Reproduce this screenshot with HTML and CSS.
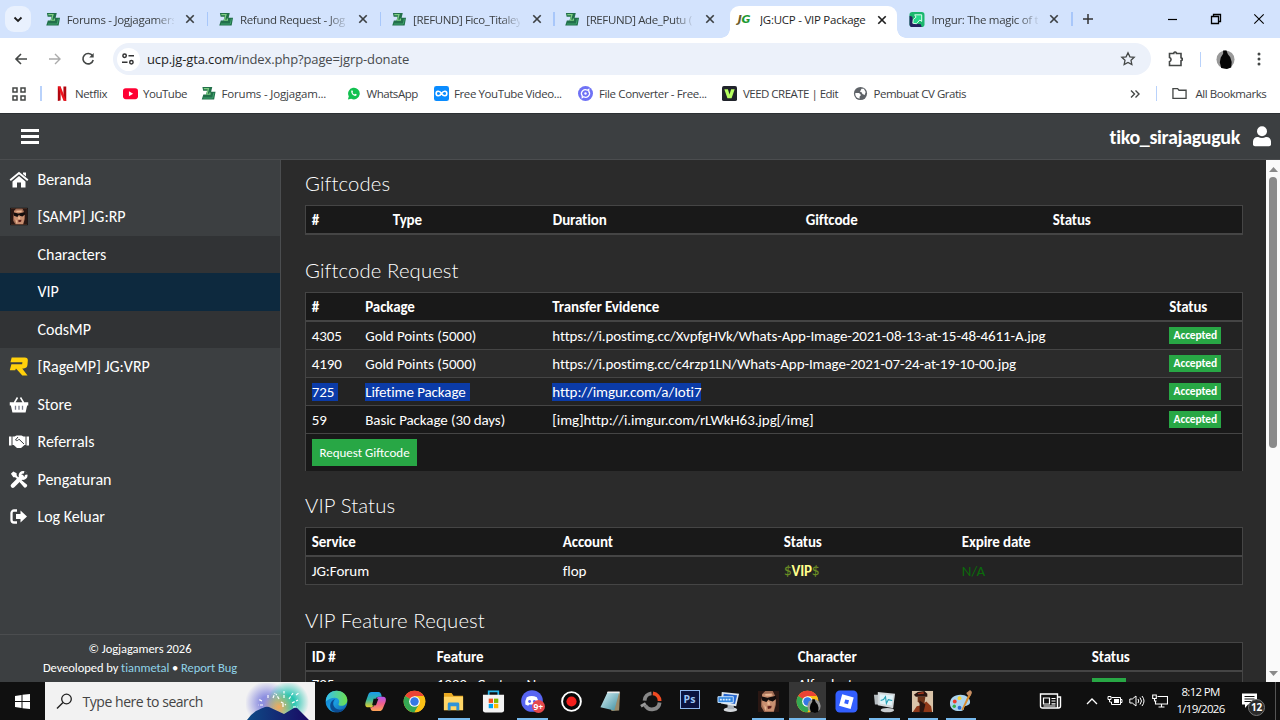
FILE: index.html
```html
<!DOCTYPE html>
<html lang="id">
<head>
<meta charset="utf-8">
<title>JG:UCP - VIP Package</title>
<link rel="stylesheet" href="styles.css">
</head>
<body>
<svg class="defs" width="0" height="0">
  <defs>
    <linearGradient id="gEdge" x1="0" y1="0" x2="1" y2="1"><stop offset="0" stop-color="#0a74c9"/><stop offset=".5" stop-color="#1b9de2"/><stop offset="1" stop-color="#0c59a4"/></linearGradient>
    <linearGradient id="gEdge2" x1="0" y1="0" x2="1" y2="0"><stop offset="0" stop-color="#35c1f1"/><stop offset="1" stop-color="#6de04d"/></linearGradient>
    <linearGradient id="gCopA" x1="0" y1="0" x2="0" y2="1"><stop offset="0" stop-color="#1a9cf0"/><stop offset=".5" stop-color="#35b6a0"/><stop offset="1" stop-color="#e8d02c"/></linearGradient>
    <linearGradient id="gCopB" x1="0" y1="0" x2="0" y2="1"><stop offset="0" stop-color="#b456f0"/><stop offset=".5" stop-color="#f0608a"/><stop offset="1" stop-color="#fda555"/></linearGradient>
    <linearGradient id="gNote" x1="0" y1="0" x2="1" y2="1"><stop offset="0" stop-color="#d9f3f6"/><stop offset="1" stop-color="#3f8ea0"/></linearGradient>
    <radialGradient id="gPurple"><stop offset=".3" stop-color="#8d8fe0"/><stop offset="1" stop-color="#8d8fe0" stop-opacity="0"/></radialGradient>
    <radialGradient id="gTeal"><stop offset=".3" stop-color="#27c5b2"/><stop offset="1" stop-color="#27c5b2" stop-opacity="0"/></radialGradient>
    <radialGradient id="gGold"><stop offset="0" stop-color="#f5a55a"/><stop offset="1" stop-color="#f0c060" stop-opacity="0"/></radialGradient>
    <linearGradient id="gHill" x1="0" y1="0" x2="1" y2="0"><stop offset="0" stop-color="#0e4a86"/><stop offset="1" stop-color="#190a63"/></linearGradient>
    <symbol id="jg" viewBox="0 0 16 16"><path d="M1.500 1h10.500L10.800 6H15.500L14 14.500H.8L2.500 9h2.800L6.500 5H2.300z" fill="#22704a"/><path d="M3 2.800h5L6.300 8.800H9.500V7" fill="none" stroke="#7fce82" stroke-width="1.300"/><path d="M2.500 12.800h10l1.200-5.500" fill="none" stroke="#3fa56f" stroke-width="1"/></symbol>
    <symbol id="x" viewBox="0 0 10 10"><path d="M1.900 1.900l6.200 6.200M8.100 1.900l-6.200 6.200" stroke="currentColor" stroke-width="1.400"/></symbol>
    <symbol id="chrome" viewBox="0 0 24 24"><circle cx="12" cy="12" r="11.300" fill="#fbc116"/><path d="M12 12L2.200 6.350A11.300 11.300 0 0 1 21.800 6.350H12z" fill="#ea4335"/><path d="M2.200 6.350A11.300 11.300 0 0 0 12 23.300l4.900-8.500L12 12z" fill="#34a853"/><path d="M12 6.500h9.850A11.300 11.300 0 0 1 12 23.300l4.900-8.500z" fill="#fbc116"/><circle cx="12" cy="12" r="5.600" fill="#fff"/><circle cx="12" cy="12" r="4.400" fill="#3478e5"/></symbol>
    <symbol id="face" viewBox="0 0 20 20"><path fill="#a06c54" d="M0 0h20v20H0z"/><path fill="#c98f70" d="M4 3l9-1 4 6-2 11H7L4 13z"/><path fill="#2a1713" d="M0 0h7L4 3l-1 8v4l3 5H0zM14 0h6v20h-5l2-7V6z"/><path fill="#120c0c" d="M3 5l6 1.500L11 6l6-1.500.5 3L14 10l-3-1-1-1-2 2.500L4 9z"/><path fill="#e9b995" d="M9 10l2 .5.500 2.500H9zM6 13l2 3-1 3zM7 3h6v1.500H7z"/><path fill="#5f1f1b" d="M9 14.500l4-.5-.5 2.500-3 .5z"/></symbol>
    <symbol id="pc" viewBox="0 0 24 24"><ellipse cx="14" cy="20.500" rx="7" ry="2.500" fill="#d4d8dc"/><path d="M11 14h6l1 6h-7z" fill="#aab2ba"/><path d="M5 2l18 2-3 13L4 14z" fill="#dfe6ec"/><path d="M7 4l14 1.500-2.300 9L6 12z" fill="#2767cf"/></symbol>
  </defs>
</svg>
<div class="screen">
  <div class="tabs">
    <div class="tab-search"><svg width="26" height="26" viewBox="0 0 26 26"><path d="M9.500 11.500l3.500 3.500 3.500-3.500" fill="none" stroke="#1f1f1f" stroke-width="1.800"/></svg></div>
    <div class="tab sep"><svg class="fav"><use href="#jg"/></svg><span>Forums - Jogjagamers</span><svg class="close"><use href="#x"/></svg></div>
    <div class="tab sep"><svg class="fav"><use href="#jg"/></svg><span>Refund Request - Jog</span><svg class="close"><use href="#x"/></svg></div>
    <div class="tab sep"><svg class="fav"><use href="#jg"/></svg><span>[REFUND] Fico_Titaley</span><svg class="close"><use href="#x"/></svg></div>
    <div class="tab"><svg class="fav"><use href="#jg"/></svg><span>[REFUND] Ade_Putu (</span><svg class="close"><use href="#x"/></svg></div>
    <div class="tab active"><b class="fav jgfav"><i>J</i>G</b><span>JG:UCP - VIP Package</span><svg class="close"><use href="#x"/></svg></div>
    <div class="tab sep last"><svg class="fav" viewBox="0 0 16 16"><rect width="16" height="16" rx="3" fill="#1bb76e"/><path d="M0 4l3 1 1 7 8 1 1 3H3a3 3 0 0 1-3-3z" fill="#23205e"/><path d="M5.500 3H13v7l-2-1.500-3.500 4-4-.5.500-4L7 5.500z" fill="#25d98a" stroke="#e8fff5" stroke-width="1"/></svg><span>Imgur: The magic of t</span><svg class="close"><use href="#x"/></svg></div>
    <svg class="plus" viewBox="0 0 12 12"><path d="M6 1v10M1 6h10" stroke="#333" stroke-width="1.500"/></svg>
    <div class="win">
      <svg viewBox="0 0 12 12"><path d="M1 6.500h9" stroke="#000" stroke-width="1.200"/></svg>
      <svg viewBox="0 0 12 12"><path d="M1.500 3.500h7v7h-7zM3.500 3.500v-2h7v7h-2" fill="none" stroke="#000" stroke-width="1.300"/></svg>
      <svg viewBox="0 0 12 12"><path d="M1.300 1.300l9.400 9.400M10.700 1.300l-9.400 9.400" stroke="#000" stroke-width="1.100"/></svg>
    </div>
  </div>

  <div class="toolbar">
    <svg class="nav" viewBox="0 0 16 16"><path d="M14 8H3M8 3L3 8l5 5" fill="none" stroke="#444746" stroke-width="1.600"/></svg>
    <svg class="nav" viewBox="0 0 16 16"><path d="M2 8h11M8 3l5 5-5 5" fill="none" stroke="#ababab" stroke-width="1.400"/></svg>
    <svg class="nav" viewBox="0 0 16 16"><path d="M12.500 4.800A5.200 5.200 0 1 0 13.200 9" fill="none" stroke="#444746" stroke-width="1.600"/><path d="M13.700 2v4.500H9.200z" fill="#444746"/></svg>
    <div class="omnibox">
      <div class="site"><svg width="14" height="14" viewBox="0 0 14 14" fill="none" stroke="#333" stroke-width="1.500"><circle cx="3.600" cy="3.800" r="1.700"/><path d="M7.500 3.800H13M1 10.200h5.500"/><circle cx="10.400" cy="10.200" r="1.700"/></svg></div>
      <span class="url"><em>ucp.jg-gta.com</em>/index.php?page=jgrp-donate</span>
      <svg width="16" height="16" viewBox="0 0 16 16"><path d="M8 1.800l1.900 4 4.300.5-3.200 3 .85 4.300L8 11.500l-3.850 2.100L5 9.300l-3.200-3 4.300-.5z" fill="none" stroke="#444746" stroke-width="1.300"/></svg>
    </div>
    <svg class="ext" viewBox="0 0 18 18"><path d="M2.500 3.500h4.300V2.800a1.500 1.500 0 0 1 2.600 0v.7H14v4.300l1.200.7v1.500l-1.200.7V15.500H2.500v-3.800a2.200 2.200 0 0 0 0-4.200z" fill="none" stroke="#444746" stroke-width="1.600"/></svg>
    <i class="vr"></i>
    <svg class="avatar" viewBox="0 0 20 20"><circle cx="10" cy="10" r="9.500" fill="#999"/><path d="M7.500.5h3.500l1.500 4 2.500 3 1.500 5-.5 6-4.500 1.500L5.500 19l-1.500-6 1-5L7.500 4z" fill="#050505"/></svg>
    <svg class="dots" viewBox="0 0 4 16" fill="#444746"><circle cx="2" cy="3" r="1.500"/><circle cx="2" cy="8" r="1.500"/><circle cx="2" cy="13" r="1.500"/></svg>
  </div>

  <div class="bookmarks">
    <svg class="apps" viewBox="0 0 14 14" fill="none" stroke="#444746" stroke-width="1.500"><path d="M1 1h4v4H1zM9 1h4v4H9zM1 9h4v4H1zM9 9h4v4H9z"/></svg>
    <i class="vr"></i>
    <div class="bm b1"><svg viewBox="0 0 16 16"><path d="M3 .5h3v15l-3 .5zM9 .5h3V16l-3-.5z" fill="#b1060f"/><path d="M3 .5h3L12 16l-3-.5z" fill="#f0121c"/></svg><span>Netflix</span></div>
    <div class="bm b2"><svg viewBox="0 0 16 16"><rect y="2.500" width="16" height="11.500" rx="3" fill="#ff0033"/><path d="M6.300 5.500l4.500 2.700-4.500 2.700z" fill="#fff"/></svg><span>YouTube</span></div>
    <div class="bm b3"><svg><use href="#jg"/></svg><span>Forums - Jogjagam...</span></div>
    <div class="bm b4"><svg viewBox="0 0 16 16"><path d="M2 14.500l1-3.500a6.200 6.200 0 1 1 2.500 2.500z" fill="#12c150"/><path d="M5.500 5l1.200-.5.800 1.800-.6.800c.4.900 1.100 1.500 2 1.900l.8-.7 1.800.8c-.2 1.200-1.100 1.700-2 1.500-2.300-.5-4.200-2.800-4-5.600z" fill="#fff"/></svg><span>WhatsApp</span></div>
    <div class="bm b5"><svg viewBox="0 0 16 16"><rect width="16" height="16" rx="2.500" fill="#0a8cff"/><path d="M8 8C5.800 4.500 2.300 5.200 2.300 8S5.800 11.500 8 8s5.700-2.800 5.700 0S10.200 11.500 8 8z" fill="none" stroke="#fff" stroke-width="1.700"/></svg><span>Free YouTube Video...</span></div>
    <div class="bm b6"><svg viewBox="0 0 16 16"><circle cx="8" cy="8" r="8" fill="#6f72f5"/><path d="M4 10a4.300 4.300 0 0 1 6-5.500l1.500-1v3.300M12 6a4.300 4.300 0 0 1-6 5.500l-1.500 1V9.200" fill="none" stroke="#fff" stroke-width="1.300"/><circle cx="8" cy="8" r="1.300" fill="#fff"/></svg><span>File Converter - Free...</span></div>
    <div class="bm b7"><svg viewBox="0 0 16 16"><rect width="16" height="16" rx="2" fill="#20232b"/><path d="M2.500 3.500h3.800L8 9l1.700-5.500h3.800L10.200 13H5.800z" fill="#b6ff60"/></svg><span>VEED CREATE | Edit</span></div>
    <div class="bm b8"><svg viewBox="0 0 16 16"><circle cx="8" cy="8" r="7" fill="#5f6368"/><path d="M2.500 7.500h4l2 2-1.500 2v2C4 13 2 10.500 2.500 7.500zM9 3l2.500 0 2 3.500-1 3-2.500-1-.5-1.500L7.500 6z" fill="#fff"/></svg><span>Pembuat CV Gratis</span></div>
    <svg class="more" viewBox="0 0 12 12"><path d="M2 2.500L5.500 6 2 9.500M6.500 2.500L10 6 6.500 9.500" fill="none" stroke="#444746" stroke-width="1.400"/></svg>
    <i class="vr"></i>
    <div class="bm all"><svg viewBox="0 0 16 16"><path d="M1 13.200V2.800h5l1.500 1.700H15v8.700z" fill="none" stroke="#444746" stroke-width="1.400"/></svg><span>All Bookmarks</span></div>
  </div>

  <div class="app-head">
    <svg width="18" height="16" viewBox="0 0 18 16"><path d="M0 0h18v3H0zM0 6h18v3H0zM0 12h18v3H0z" fill="#fff"/></svg>
    <div class="user"><span>tiko_sirajaguguk</span><svg width="18" height="21" viewBox="0 0 18 21" fill="#fff"><circle cx="9" cy="5.200" r="5"/><path d="M0 18v-2.500C0 12.800 2 11 4.500 11h.7a8 8 0 0 0 7.600 0h.7C16 11 18 12.800 18 15.500V18a2 2 0 0 1-2 2.200H2A2 2 0 0 1 0 18z"/></svg></div>
  </div>

  <div class="main">
    <aside>
      <ul class="menu">
        <li><svg viewBox="0 0 20 18"><path d="M1.200 9.700L10 2.500l8.800 7.200" fill="none" stroke="#fff" stroke-width="2"/><path d="M14 2h3v4l-3-2.500zM10 5.500l6.500 5.500v6H12v-5H8v5H3.500v-6z" fill="#fff"/></svg>Beranda</li>
        <li><svg viewBox="-2 -1.500 24 23"><path d="M-.5-.5h21v21h-21z"/><use href="#face" width="20" height="20"/></svg>[SAMP] JG:RP</li>
        <li class="sub">Characters</li>
        <li class="sub on">VIP</li>
        <li class="sub">CodsMP</li>
        <li><svg viewBox="0 0 20 20"><path d="M2.300.5H16q3.500 0 3.300 3.300l-.4 4.700q-.4 3.500-4 3.500h-1.500L19 19.500h-5.500L6.800 12 6 14H.3L2 7.500h11.300l.3-2H1z" fill="#ffd00b"/></svg>[RageMP] JG:VRP</li>
        <li><svg viewBox="0 0 20 18"><path d="M1.500 7.500h17v1.800h-1L16 16.200H4L2.500 9.300h-1zM5.500 7l3-5M14.500 7l-3-5" fill="#fff" stroke="#fff" stroke-width="1.500"/><path d="M6.500 10.300v4M10 10.300v4M13.500 10.300v4" stroke="#777b8a" stroke-width="1.300"/></svg>Store</li>
        <li><svg viewBox="0 0 20 18"><path d="M0 4h2.500v9H0zM17.500 4H20v9h-2.500zM3.500 4h2l2-1h5l2 1h2v8.500h-1L12 15.500H8L4.700 12.500H3.500z" fill="#fff"/><path d="M9 4.500L6.500 7.500c1.500 1.500 3 0 3.500-.8l5 4.800" fill="none" stroke="#3c3f41" stroke-width="1"/></svg>Referrals</li>
        <li><svg viewBox="0 0 20 20"><path d="M3.500 3.500L16 16" stroke="#fff" stroke-width="2.200"/><path d="M1.500 4L4 1.500l3.500 2v3L6.500 7.500H4zM10.500 12.500l2-2 6 5c.8 1.500-1.500 3.700-3 3z" fill="#fff"/><path d="M3.500 16.500L13 7" stroke="#fff" stroke-width="4.500" stroke-linecap="round"/><circle cx="14.300" cy="5.700" r="3.300" fill="none" stroke="#fff" stroke-width="2.800"/><path d="M14.500 5.500l1.500-5 4 4z" fill="#3c3f41"/></svg>Pengaturan</li>
        <li><svg viewBox="0 0 20 18"><path d="M8 3H5a2.500 2.500 0 0 0-2.500 2.500v7A2.500 2.500 0 0 0 5 15h3" fill="none" stroke="#fff" stroke-width="2.300"/><path d="M7 6.500h4.500V3L18 9l-6.500 6v-3.500H7z" fill="#fff"/></svg>Log Keluar</li>
      </ul>
      <footer><div>© Jogjagamers 2026</div><div>Deveoloped by <a>tianmetal</a> • <a>Report Bug</a></div></footer>
    </aside>
    <section>
      <h4>Giftcodes</h4>
      <table class="t1"><thead><tr><th>#</th><th>Type</th><th>Duration</th><th>Giftcode</th><th>Status</th></tr></thead></table>
      <h4>Giftcode Request</h4>
      <table class="t2">
        <thead><tr><th>#</th><th>Package</th><th>Transfer Evidence</th><th>Status</th></tr></thead>
        <tbody>
          <tr><td>4305</td><td>Gold Points (5000)</td><td>https://i.postimg.cc/XvpfgHVk/Whats-App-Image-2021-08-13-at-15-48-4611-A.jpg</td><td><b class="badge">Accepted</b></td></tr>
          <tr><td>4190</td><td>Gold Points (5000)</td><td>https://i.postimg.cc/c4rzp1LN/Whats-App-Image-2021-07-24-at-19-10-00.jpg</td><td><b class="badge">Accepted</b></td></tr>
          <tr><td><mark class="pad">725</mark></td><td><mark class="pad">Lifetime Package</mark></td><td><mark>http://imgur.com/a/Ioti7</mark></td><td><b class="badge">Accepted</b></td></tr>
          <tr class="dark"><td>59</td><td>Basic Package (30 days)</td><td>[img]http://i.imgur.com/rLWkH63.jpg[/img]</td><td><b class="badge">Accepted</b></td></tr>
          <tr class="dark foot"><td colspan="4"><button>Request Giftcode</button></td></tr>
        </tbody>
      </table>
      <h4>VIP Status</h4>
      <table class="t3">
        <thead><tr><th>Service</th><th>Account</th><th>Status</th><th>Expire date</th></tr></thead>
        <tbody><tr><td>JG:Forum</td><td>flop</td><td class="vip">$<b>VIP</b>$</td><td class="na">N/A</td></tr></tbody>
      </table>
      <h4>VIP Feature Request</h4>
      <table class="t4">
        <thead><tr><th>ID #</th><th>Feature</th><th>Character</th><th>Status</th></tr></thead>
        <tbody><tr><td>725</td><td>1333 : Custom Name</td><td>Alfredostar</td><td><b class="badge short"></b></td></tr></tbody>
      </table>
    </section>
    <div class="scroll"><svg width="9" height="5" viewBox="0 0 9 5"><path d="M0 5l4.500-5L9 5z" fill="#8a8a8a"/></svg><i></i><svg width="9" height="5" viewBox="0 0 9 5"><path d="M0 0l4.500 5L9 0z" fill="#8a8a8a"/></svg></div>
  </div>

  <div class="taskbar">
    <div class="start"><svg width="15" height="15" viewBox="0 0 15 15"><path d="M0 2l6.500-1v6H0zM7.500.8L15 0v7H7.500zM0 8h6.500v6L0 13zM7.500 8H15v7l-7.500-.8z" fill="#fff"/></svg></div>
    <div class="search">
      <svg width="17" height="17" viewBox="0 0 17 17"><circle cx="10.500" cy="6" r="4.800" fill="none" stroke="#222" stroke-width="1.300"/><path d="M7 9.500L1 15.500" stroke="#222" stroke-width="1.400"/></svg>
      <span>Type here to search</span>
      <svg class="art" width="66" height="37" viewBox="0 0 66 37"><circle cx="21" cy="20" r="22" fill="url(#gPurple)"/><circle cx="42" cy="19" r="21" fill="url(#gTeal)"/><circle cx="33" cy="24" r="16" fill="url(#gGold)"/><g stroke="#fff" stroke-width="1.200" fill="none"><path d="M22 15v-4M16 18l-4-2M27 15l2-5M17 22h-5M38 15V8M43 16l4-6M46 20l6-3M33 16l-3-5M47 24h5M37 21v3M35 19l5 3M50 12l3-2" stroke-dasharray="3 1.500"/></g><path d="M1 37q3-5 9-9 6-3 9-4 3-1 6 1l13 6 10-6q3-1 5 2l10 10z" fill="url(#gHill)"/></svg>
    </div>
    <div class="icons">
      <div class="ic"><svg viewBox="0 0 24 24"><circle cx="12" cy="12" r="11.300" fill="url(#gEdge)"/><path d="M1 10C2 4 7 .7 12 .7c7 0 11.300 5 11.300 9.800 0 4-3 6-6 6-2.800 0-3.800-1.200-3-2.500 1.500-2.500 0-6-4-6-4 0-7.500 2-9.300 4z" fill="url(#gEdge2)"/><path d="M10.500 9.500c-4 4-1.500 11 5 11 2 0 4-.8 5.500-2-3 5-8 5.500-12 4C4 20.500 4 11.500 10.500 9.500z" fill="#0b4b92"/></svg></div>
      <div class="ic"><svg viewBox="0 0 24 24"><path d="M8 2h7c2 0 2.700 1.500 3.200 3.500L18.500 7h-3c-2 0-3 1-3.500 3l-2 6c-.5 1.500-1.500 2-3 2H4c-3 0-3-3-2.300-5.500l2.500-7C5 3 6 2 8 2z" fill="url(#gCopA)"/><path d="M15.500 7H20c3 0 3.300 3 2.500 5.500l-2.500 6c-.8 2.500-2 3.500-4 3.500H9.500C7.500 22 7 20.500 6.500 18H8c1.500 0 2.500-1 3-2.500l2-6c.5-1.500 1-2.500 2.500-2.500z" fill="url(#gCopB)"/><path d="M10 9h5l-2.500 7h-4z" fill="#101010"/></svg></div>
      <div class="ic"><svg><use href="#chrome"/></svg></div>
      <div class="ic run"><svg viewBox="0 0 24 24"><path d="M2 3h8l2 3h10v15H2z" fill="#e8a820"/><path d="M2 7h20v14H2z" fill="#ffd667"/><path d="M6 21v-6.500q0-1.500 1.500-1.500h9q1.500 0 1.500 1.500V21h-3v-4H9v4z" fill="#2e93d8"/></svg></div>
      <div class="ic"><svg viewBox="0 0 24 24"><path d="M7 6V1.500h10V6" fill="none" stroke="#25b5e9" stroke-width="1.800"/><path d="M1 5h22v16q0 2.500-2.500 2.500h-17Q1 23.500 1 21z" fill="#f3f3f3"/><path d="M7 9h4.500v4.500H7z" fill="#f25022"/><path d="M12.500 9H17v4.500h-4.500z" fill="#7fba00"/><path d="M7 14.500h4.500V19H7z" fill="#00a4ef"/><path d="M12.500 14.500H17V19h-4.500z" fill="#ffb900"/></svg></div>
      <div class="ic run"><svg viewBox="0 0 24 24"><circle cx="11.500" cy="11.500" r="11.300" fill="#5865f2"/><path d="M6 7.500q5-2.500 10.500 0Q19 12 18.500 15l-3 1.500-1-1.500H8.500l-1 1.500-3-1.500Q4 11 6 7.500z" fill="#fff"/><circle cx="9" cy="12" r="1.500" fill="#5865f2"/><circle cx="14" cy="12" r="1.500" fill="#5865f2"/></svg><b class="nine">9+</b></div>
      <div class="ic"><svg viewBox="0 0 24 24"><circle cx="12" cy="12" r="9.800" fill="#080808" stroke="#fff" stroke-width="2"/><circle cx="12" cy="12" r="5.300" fill="#f41f1c"/></svg></div>
      <div class="ic"><svg viewBox="0 0 24 24"><path d="M9 2l13 .5-1 19-8 .5z" fill="#9b8b6a"/><path d="M9 2l12 .5-5 19L1.500 18z" fill="url(#gNote)"/><path d="M9 1.500h12.500v2L8.500 3z" fill="#eee"/></svg></div>
      <div class="ic"><svg viewBox="0 0 24 24" fill="none" stroke-width="4"><path d="M21.500 13a8 8 0 0 1-15 3M5.800 11A8 8 0 0 1 13 3.500" stroke="#878787"/><path d="M14.500 3.500a8 8 0 0 1 7 8" stroke="#f04a22"/><path d="M7 14l-5 3" stroke="#9a9a9a" stroke-width="3"/></svg></div>
      <div class="ic"><b class="ps">Ps</b></div>
      <div class="ic"><svg viewBox="0 0 24 24"><use href="#pc"/><path d="M1 7h16v6H1z" fill="#2f83de" stroke="#c9e5ff" stroke-width="1"/><path d="M3 10h12" stroke="#dff0ff" stroke-width="2" stroke-dasharray="2 1"/></svg></div>
      <div class="ic run"><svg viewBox="0 0 24 24"><use href="#face" x="1" y="1" width="22" height="22"/></svg></div>
      <div class="ic run cur"><svg><use href="#chrome"/></svg><svg class="mini" viewBox="0 0 20 20"><circle cx="10" cy="10" r="9.500" fill="#999"/><path d="M7.500.5h3.500l1.500 4 2.500 3 1.500 5-.5 6-4.500 1.500L5.500 19l-1.500-6 1-5L7.500 4z" fill="#050505"/></svg></div>
      <div class="ic"><svg viewBox="0 0 24 24"><rect x=".5" y=".5" width="23" height="23" rx="4.500" fill="#335fff"/><path d="M7.500 4.500l12 3.200-3.200 12-12-3.200z" fill="#fff"/><path d="M10.700 9.800l4 1-1.200 4-3.900-1.100z" fill="#335fff"/></svg></div>
      <div class="ic run"><svg viewBox="0 0 24 24"><path d="M1 5h8v10H2z" fill="#b5bcc0"/><ellipse cx="15" cy="21" rx="7" ry="2.300" fill="#c7cccf"/><path d="M5 2l18 2-2 15-16-3z" fill="#d2d8db"/><path d="M7 4.500l14 1.300-1.500 10.500L7 14z" fill="#dff3f9"/><path d="M8 11l3-1 2-3 1 7 2-4 4 1" fill="none" stroke="#22a0b4" stroke-width="1.200"/></svg></div>
      <div class="ic run"><svg viewBox="0 0 24 24"><path fill="#d9c3a8" d="M1 1h22v22H1z"/><path d="M3 5l4-3 7-1 3 3v3L5 7z" fill="#2b1510"/><path d="M7 3.500l6-1.500.5 2-6 .5z" fill="#a3361c"/><path d="M7 7h8l-1 7-4 1-3-3z" fill="#6b3319"/><path d="M2 23l4-6 5-1 5-4 5 5 1 6z" fill="#8f3818"/><path d="M9 11l6 4-2 8H9z" fill="#2a1510"/></svg></div>
      <div class="ic run"><svg viewBox="0 0 24 24"><path d="M12 5C5 5 1 9 1 14s4 8 10 8 4-3 5-4.500 6-1 6-5S18 5 12 5z" fill="#a9d3ee"/><circle cx="6" cy="12" r="2" fill="#ef3b2b"/><circle cx="11" cy="8.500" r="2" fill="#f8d233"/><circle cx="5.500" cy="17" r="1.800" fill="#35b04a"/><circle cx="11" cy="18.500" r="2" fill="#2d6bd0"/><path d="M22 1l1.500 3-9 17-1.500-.5z" fill="#d88b2c"/><path d="M18 3l4-3 2 2-1.500 4-3-.5z" fill="#c78f66"/></svg></div>
    </div>
    <div class="tray">
      <svg class="news" viewBox="0 0 22 16" fill="none" stroke="#fff" stroke-width="1.400"><path d="M1 1h17v14H3q-2 0-2-2zM18 4h3v9q0 2-2 2h-2"/><path d="M4 5h6v6H4zM12 5.500h4M12 8h4M12 10.800h4M4 13h12" stroke-width="1.200"/></svg>
      <svg class="chev" viewBox="0 0 12 8"><path d="M1 7l5-5 5 5" fill="none" stroke="#fff" stroke-width="1.300"/></svg>
      <svg class="t16" viewBox="0 0 16 16" fill="none" stroke="#fff"><path d="M4.500 4.500h9v7h-9V9M13.500 6.500H15v3h-1.500M1 3.500h3v3H1zM2.500 6.500V9h2"/><path d="M7 6h5v4H7z" fill="#fff" stroke="none"/></svg>
      <svg class="t16" viewBox="0 0 16 16" fill="none" stroke="#fff"><path d="M.8 6h2.500L7 3v10L3.300 10H.8zM9 6q1.500 2 0 4M11 4.500q3 3.500 0 7M13 3q4 5 0 10"/></svg>
      <svg class="t16" viewBox="0 0 16 16" fill="none" stroke="#fff" stroke-width="1.100"><path d="M5.500 3.500h10v7.500h-12V8M9.500 11v3M6.500 14h6M.7 2h3.600v3.500H.7zM2.500 5.500V8h2"/></svg>
      <div class="clock"><div>8:12 PM</div><div>1/19/2026</div></div>
      <div class="notif"><svg width="16" height="16" viewBox="0 0 16 16"><path d="M0 .5h15v11H6L3 15v-3.500H0z" fill="#fff"/><path d="M2.500 3.500h10M2.500 6h10M2.500 8.500h10" stroke="#101010"/></svg><b>12</b></div>
    </div>
  </div>
</div>
</body>
</html>
```
FILE: styles.css
```css
* { box-sizing: border-box; }
body { margin: 0; font-family: "Open Sans", sans-serif; }
.defs { position: absolute; }
.screen { width: 1280px; height: 720px; overflow: hidden; display: flex; flex-direction: column; }
svg { display: block; flex: none; }

.tabs { height: 38px; background: #d3e3fd; display: flex; align-items: center; flex: none; font-size: 11.500px; letter-spacing: -.3px; color: #3c4043; }
.tab-search { width: 26px; height: 26px; border-radius: 9px; background: #e9f1fe; margin: 0 4px 0 5px; }
.tab { width: 173.200px; height: 38px; display: flex; align-items: center; padding-left: 9.500px; position: relative; }
.fav { width: 16px; height: 15px; margin-right: 6.200px; flex: none; }
.tab span { width: 107px; overflow: hidden; white-space: nowrap; mask-image: linear-gradient(90deg, #000 82%, rgba(0, 0, 0, .1)); }
.tab:nth-child(4) span, .tab:nth-child(5) span { letter-spacing: -.38px; }
.close { width: 12px; height: 12px; margin-left: 10.500px; }
.sep::after { content: ""; position: absolute; right: 0; top: 12px; width: 1.500px; height: 14px; background: #a8c7fa; }
.active { height: 32px; align-self: flex-end; width: 167px; margin: 0 4px 0 2px; padding: 0 0 5px 8px; background: #fff; border-radius: 9px 9px 0 0; color: #1f1f1f; letter-spacing: -.25px; }
.active span { mask-image: none; }
.active .close { margin-left: 9px; }
.active::before, .active::after { content: ""; position: absolute; bottom: 0; width: 9px; height: 9px; }
.active::before { left: -9px; background: radial-gradient(circle at 0 0, transparent 8.500px, #fff 9px); }
.active::after { right: -9px; background: radial-gradient(circle at 100% 0, transparent 8.500px, #fff 9px); }
.jgfav { color: #1c9a31; font: italic bold 11px/15px "DejaVu Sans", sans-serif; letter-spacing: -.3px; }
.jgfav i { color: #6b5b2c; }
.last { width: 172px; padding-left: 8.500px; }
.last .close { margin-left: 9.500px; }
.plus { width: 12px; height: 12px; margin-left: 9.500px; }
.win { margin-left: auto; display: flex; gap: 31px; padding-right: 15.500px; }
.win svg { width: 12px; height: 12px; }

.toolbar { height: 42px; display: flex; align-items: center; background: #fff; flex: none; padding-left: 13px; }
.nav { width: 16px; height: 16px; margin-right: 17.500px; }
.omnibox { width: 1038px; height: 32px; border-radius: 16px; background: #ecf1fa; display: flex; align-items: center; padding: 0 15px 0 4px; margin-left: -1px; }
.site { width: 23px; height: 23px; border-radius: 50%; background: #fff; display: grid; place-items: center; }
.url { flex: 1; margin-left: 7.500px; font-size: 13px; letter-spacing: -.12px; color: #474a4d; }
.url em { font-style: normal; color: #1f1f1f; }
.ext { width: 18px; height: 18px; margin-left: 16px; }
.vr { width: 1.500px; height: 15px; background: #b9d2fb; flex: none; }
.toolbar .vr { margin-left: 15px; }
.avatar { width: 19px; height: 19px; margin-left: 15px; }
.dots { width: 4px; height: 16px; margin-left: 22px; }

.bookmarks { height: 33px; display: flex; align-items: center; background: #fff; flex: none; padding: 0 0 6px 12px; font-size: 11.500px; letter-spacing: -.38px; color: #3c4043; }
.apps { width: 14px; height: 14px; margin-right: 14px; }
.bm { display: flex; align-items: center; gap: 5.500px; white-space: nowrap; }
.bm svg { width: 15px; height: 15px; }
.b1 { width: 68px; margin-left: 13px; }
.b2 { width: 78.500px; letter-spacing: -.48px; }
.b3 { width: 145px; letter-spacing: -.18px; }
.b4 { width: 87.500px; letter-spacing: -.45px; }
.b5 { width: 144.500px; letter-spacing: -.4px; }
.b6 { width: 144px; gap: 6px; }
.b7 { width: 131px; letter-spacing: -.52px; gap: 6px; }
.b8 { width: 275.500px; letter-spacing: -.48px; }
.more { width: 12px; height: 12px; margin-right: 15px; }
.all { margin-left: 15px; gap: 8.500px; letter-spacing: -.45px; }

.app-head { height: 47px; flex: none; background: #3c3f41; border-top: 1px solid #2c3033; border-bottom: 1px solid #4b4d4f; display: flex; align-items: center; justify-content: space-between; padding: 0 9px 0 21px; color: #fff; font-family: Carlito, Lato, sans-serif; }
.user { display: flex; align-items: center; gap: 13px; font-weight: bold; font-size: 20px; letter-spacing: -.35px; }
.main { height: 522px; display: flex; flex: none; font-family: Carlito, Lato, sans-serif; font-size: 15px; color: #fff; background: #2b2b2b; }
aside { width: 281px; background: #3c3f41; border-right: 1px solid #4b4d4f; display: flex; flex-direction: column; justify-content: space-between; }
.menu { list-style: none; margin: 0; padding: .5px 0 0; }
.menu li { height: 37.500px; display: flex; align-items: center; padding-left: 9px; gap: 8.500px; font-size: 16px; letter-spacing: -.02px; }
.menu svg { width: 20px; height: 19px; }
.menu .sub { background: #313335; padding-left: 37.500px; }
.menu .on { background: #0d293e; }
footer { height: 48px; border-top: 1px solid #4b4d4f; text-align: center; font-size: 12.500px; letter-spacing: -.05px; line-height: 19px; padding-top: 4px; }
footer a { color: #8fd3e8; }
section { flex: 1; padding: 8px 24px 0; overflow: hidden; }
h4 { margin: 0; font: 300 20.300px/30px Lato, Carlito, sans-serif; letter-spacing: .12px; height: 37px; }
table { width: 938px; table-layout: fixed; border-collapse: separate; border-spacing: 0; border: 1px solid #454545; border-bottom: 0; margin-bottom: 20px; }
table.t2 { margin-bottom: 19px; }
th { height: 29px; background: #191919; border-bottom: 2px solid #454545; text-align: left; padding: 0 6px 0 5.800px; letter-spacing: -.12px; }
td { height: 28px; padding: 0 6px 0 5.800px; border-bottom: 1px solid #454545; background: #232323; white-space: nowrap; letter-spacing: -.09px; }
tr:nth-child(2) td { background: #2b2b2b; }
tr.dark td { background: #191919; }
.foot td { height: 37px; border-bottom: 0; padding: 0 0 1px 6px; }
.t4 td { height: 28px; padding-bottom: 3px; }
.t4 td:last-child { padding: 6px 6px 0; vertical-align: top; }
.t1 th:nth-child(1) { width: 81px; }
.t1 th:nth-child(2) { width: 160px; }
.t1 th:nth-child(3) { width: 253px; }
.t1 th:nth-child(4) { width: 247px; }
.t2 th:nth-child(1) { width: 53.500px; }
.t2 th:nth-child(2) { width: 187px; }
.t2 th:nth-child(3) { width: 617px; }
.t3 th:nth-child(1) { width: 251px; }
.t3 th:nth-child(2) { width: 221px; }
.t3 th:nth-child(3) { width: 178px; }
.t4 th:nth-child(1) { width: 125px; }
.t4 th:nth-child(2) { width: 361px; }
.t4 th:nth-child(3) { width: 294px; }
mark { background: #0b3ba8; color: #fff; display: inline-block; line-height: 18px; }
mark.pad { padding-right: 4px; }
.badge { display: block; width: 52px; height: 17px; margin-bottom: 1px; background: #28a745; text-align: center; font-size: 11.500px; line-height: 17px; letter-spacing: -.12px; }
.badge.short { width: 34px; margin: 0; }
button { display: block; border: 0; background: #28a745; color: #fff; width: 105px; height: 27px; font: 13px Carlito, Lato, sans-serif; padding: 0; }
.vip { color: #6b8e23; font-size: 16px; letter-spacing: -.3px; }
.vip b { color: #ffff8c; font-size: 15px; }
.na { color: #0b6b0b; }
.scroll { width: 14px; background: #fafafa; display: flex; flex-direction: column; align-items: center; padding: 7px 0 6px; }
.scroll i { width: 8px; height: 271px; border-radius: 4px; background: #8a8a8a; margin: 5px 0 auto; }

.taskbar { height: 38px; background: #101010; display: flex; flex: none; color: #fff; }
.start { width: 45px; flex: none; display: grid; place-items: center; }
.search { width: 270px; flex: none; background: #f2f2f2; display: flex; align-items: center; padding-left: 11px; color: #444; font-size: 14px; letter-spacing: -.45px; }
.search span { margin-left: 9.500px; flex: 1; }
.art { align-self: flex-end; margin-right: 3px; }
.icons { display: flex; flex: none; margin-left: 1.500px; }
.ic { width: 39.280px; flex: none; display: grid; place-items: center; position: relative; }
.ic:nth-child(n+14) { width: 38.300px; }
.ic svg { width: 23px; height: 23px; }
.run::after { content: ""; position: absolute; bottom: 0; left: 4px; right: 4px; height: 2px; background: #76b9ed; }
.cur { background: linear-gradient(#363636, #363636) center / 37px 100% no-repeat; }
.cur::after { left: 1px; right: 1px; }
.ic svg.mini { position: absolute; width: 14px; height: 14px; right: 6px; bottom: 7px; }
.nine { position: absolute; left: 19px; top: 18px; width: 13px; height: 13px; border-radius: 50%; background: #e5484d; font-size: 8.500px; line-height: 13px; text-align: center; }
.ps { width: 20px; height: 19px; margin-bottom: 3px; border: 1px solid #8fb6ee; background: #0a1240; color: #9cc4f7; font-size: 10.500px; line-height: 16px; text-align: center; }
.tray { display: flex; align-items: center; flex: none; margin-left: auto; }
.news { width: 23px; height: 16px; margin-right: 24px; }
.chev { width: 12px; height: 8px; margin-right: 9px; }
.t16 { width: 16px; height: 16px; margin-right: 6.500px; }
.clock { width: 69px; text-align: center; font-size: 11.500px; line-height: 17px; letter-spacing: -.7px; margin: -2px 0 0 -8px; }
.notif { width: 41px; height: 38px; padding: 11px 0 0 7px; border-right: 1px solid #555; position: relative; margin-right: 4px; }
.notif b { position: absolute; left: 13px; top: 17px; width: 17px; height: 17px; border: 1px solid #777; border-radius: 50%; background: #2b2b2b; font-size: 10px; line-height: 15px; text-align: center; letter-spacing: -.3px; }
```
